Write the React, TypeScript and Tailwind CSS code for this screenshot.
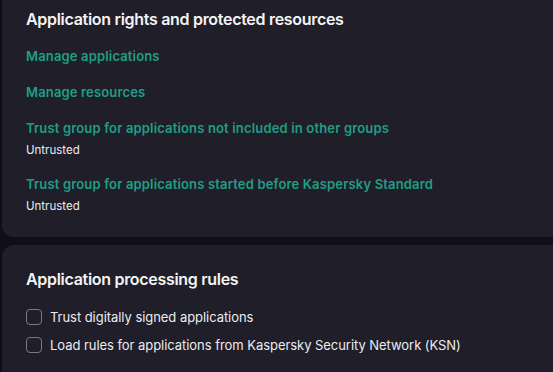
export default function App() {
  const font = { fontFamily: 'Inter, "Noto Sans", sans-serif' };
  const link = 'text-[13px] leading-[20px] font-semibold tracking-[0.16px] text-[#1f9e86]';
  return (
    <div style={font} className="h-[372px] w-full overflow-hidden bg-[#100f17] pl-[2px] flex flex-col gap-[8px]">
      <div className="h-[237px] shrink-0 rounded-bl-[12px] bg-[#1f1e29] pl-[24px] pt-[7px]">
        <h2 className="text-[16px] leading-[24px] font-semibold tracking-[-0.3px] text-[#f4f4f6]">
          Application rights and protected resources
        </h2>
        <div className="mt-[15px] flex flex-col gap-[16px]">
          <a className={link}>Manage applications</a>
          <a className={link}>Manage resources</a>
          <div className="flex flex-col gap-[4px]">
            <a className={link}>Trust group for applications not included in other groups</a>
            <span className="text-[11.5px] leading-[16px] text-[#ececf0]">Untrusted</span>
          </div>
          <div className="flex flex-col gap-[4px]">
            <a className={link}>Trust group for applications started before Kaspersky Standard</a>
            <span className="text-[11.5px] leading-[16px] text-[#ececf0]">Untrusted</span>
          </div>
        </div>
      </div>
      <div className="flex-1 rounded-tl-[12px] bg-[#1f1e29] pl-[24px] pt-[22px]">
        <h2 className="text-[16px] leading-[24px] font-semibold tracking-[-0.3px] text-[#f4f4f6]">
          Application processing rules
        </h2>
        <div className="mt-[16px] flex flex-col gap-[8px]">
          {[
            'Trust digitally signed applications',
            'Load rules for applications from Kaspersky Security Network (KSN)',
          ].map((t) => (
            <label key={t} className="flex items-center gap-[8px] h-[20px]">
              <span className="h-[16px] w-[16px] rounded-[4px] border-[1.5px] border-[#7a7985]" />
              <span className="text-[13px] leading-[20px] tracking-[-0.05px] text-[#ececf0]">{t}</span>
            </label>
          ))}
        </div>
      </div>
    </div>
  );
}
